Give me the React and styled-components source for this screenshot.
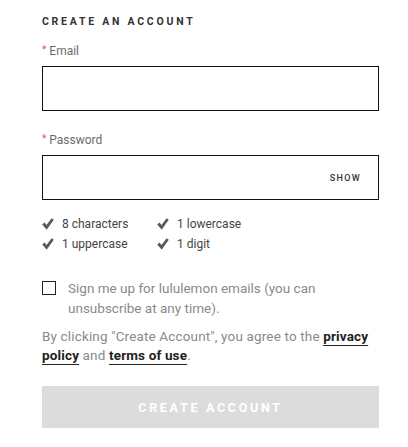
import React, { useState } from 'react';
import styled, { createGlobalStyle } from 'styled-components';

const GlobalStyle = createGlobalStyle`
	body {
		margin: 0;
		background: #fff;
		font-family: Roboto, "Liberation Sans", Arial, sans-serif;
	}
`;

const Form = styled.form`
	width: 337px;
	padding: 15px 0 0 42px;
	display: flex;
	flex-direction: column;
`;

const Title = styled.h2`
	margin: 0;
	font-size: 10.5px;
	line-height: 14px;
	font-weight: 700;
	letter-spacing: 2.75px;
	color: #333;
`;

const Label = styled.label`
	display: block;
	margin-top: ${(p) => p.$top}px;
	font-size: 12px;
	line-height: 16px;
	color: #6b6b6b;
	& span {
		color: #d65a5a;
		margin-right: 3px;
		font-size: 10px;
		vertical-align: 2px;
	}
`;

const Field = styled.div`
	margin-top: 7px;
	height: 45px;
	border: 1px solid #111;
	display: flex;
	align-items: center;
	justify-content: flex-end;
	box-sizing: border-box;
	padding: 0 17px;
`;

const Input = styled.input`
	flex: 1;
	border: 0;
	outline: none;
	height: 100%;
	font: inherit;
	background: transparent;
`;

const Show = styled.button`
	border: 0;
	background: none;
	padding: 0;
	font-family: inherit;
	font-size: 9px;
	font-weight: 500;
	letter-spacing: 1.3px;
	color: #333;
	cursor: pointer;
`;

const Rules = styled.ul`
	list-style: none;
	margin: 16px 0 0;
	padding: 0;
	display: grid;
	grid-template-columns: 115px 1fr;
	row-gap: 4px;
`;

const Rule = styled.li`
	display: flex;
	align-items: center;
	gap: 8px;
	font-size: 12px;
	line-height: 16px;
	color: #444;
`;

const Check = () => (
	<svg width='12' height='12' viewBox='0 0 12 12'>
		<path d='M0.2 6.6 L2.6 4.6 L4.5 6.9 L9.6 0.2 L11.8 1.8 L4.7 11.8 Z' fill='#5a5a5a' />
	</svg>
);

const OptIn = styled.label`
	margin-top: 26px;
	display: flex;
	gap: 12px;
	align-items: flex-start;
	font-size: 13.5px;
	line-height: 20px;
	color: #8a8a8a;
	cursor: pointer;
`;

const Box = styled.span`
	flex: none;
	box-sizing: border-box;
	width: 14px;
	height: 14px;
	margin-top: 3px;
	border: 1px solid #222;
	background: ${(p) => (p.$on ? '#222' : '#fff')};
`;

const Legal = styled.p`
	margin: 9px 0 0;
	font-size: 13.5px;
	line-height: 19px;
	letter-spacing: 0.15px;
	color: #8a8a8a;
	& a {
		color: #222;
		font-weight: 700;
		text-decoration: underline;
		text-decoration-thickness: 1px;
		text-underline-offset: 4px;
	}
`;

const Submit = styled.button`
	margin-top: 21px;
	height: 42px;
	border: 0;
	background: #dcdcdc;
	color: #fff;
	font-family: inherit;
	font-size: 12.5px;
	font-weight: 700;
	letter-spacing: 2.7px;
	cursor: not-allowed;
`;

const rules = ['8 characters', '1 lowercase', '1 uppercase', '1 digit'];

const App = () => {
	const [show, setShow] = useState(false);
	const [optIn, setOptIn] = useState(false);
	return (
		<>
			<GlobalStyle />
			<Form onSubmit={(e) => e.preventDefault()}>
				<Title>CREATE AN ACCOUNT</Title>
				<Label $top={13}>
					<span>*</span>Email
				</Label>
				<Field>
					<Input type='email' />
				</Field>
				<Label $top={20}>
					<span>*</span>Password
				</Label>
				<Field>
					<Input type={show ? 'text' : 'password'} />
					<Show type='button' onClick={() => setShow(!show)}>
						{show ? 'HIDE' : 'SHOW'}
					</Show>
				</Field>
				<Rules>
					{rules.map((r) => (
						<Rule key={r}>
							<Check />
							{r}
						</Rule>
					))}
				</Rules>
				<OptIn onClick={() => setOptIn(!optIn)}>
					<Box $on={optIn} />
					<span>Sign me up for lululemon emails (you can unsubscribe at any time).</span>
				</OptIn>
				<Legal>
					By clicking "Create Account", you agree to the <a href='#'>privacy policy</a> and{' '}
					<a href='#'>terms of use</a>.
				</Legal>
				<Submit type='submit' disabled>
					CREATE ACCOUNT
				</Submit>
			</Form>
		</>
	);
};

export default App;
